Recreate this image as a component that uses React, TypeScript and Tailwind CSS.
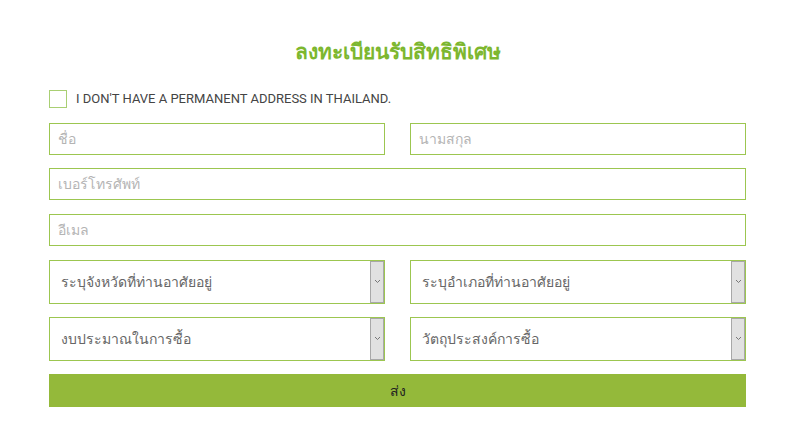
import React from 'react';

const font = { fontFamily: '"Noto Sans", "Open Sans", "DejaVu Sans", sans-serif' };

const TextField = ({ placeholder }: { placeholder: string }) => (
  <div className="h-[32px] flex-1 border border-[#9cc650] bg-white flex items-center px-[8px]">
    <span className="text-[14px] text-[#b4b4b4]">{placeholder}</span>
  </div>
);

const SelectField = ({ placeholder }: { placeholder: string }) => (
  <div className="h-[44px] flex-1 border border-[#9cc650] bg-white flex items-stretch">
    <div className="flex-1 flex items-center px-[11px]">
      <span className="text-[14px] text-[#666]">{placeholder}</span>
    </div>
    <div className="w-[14px] bg-[#e1e1e1] border border-[#a8a8a8] flex items-center justify-center">
      <svg width="7" height="5" viewBox="0 0 7 5">
        <path d="M1 1l2.5 2.5L6 1" stroke="#777" strokeWidth="1" fill="none" />
      </svg>
    </div>
  </div>
);

export default function App() {
  return (
    <div className="w-[800px] h-[445px] bg-white" style={font}>
      <div className="ml-[49px] w-[697px] pt-[35px] flex flex-col">
        <h1 className="text-center text-[21px] font-bold text-[#7db72f] leading-[32px]">
          ลงทะเบียนรับสิทธิพิเศษ
        </h1>

        <label className="mt-[22px] flex items-center gap-[9px]">
          <span className="w-[18px] h-[18px] border border-[#a9cf73] bg-white"></span>
          <span className="text-[13px] text-[#444] font-['Roboto',sans-serif]">I DON'T HAVE A PERMANENT ADDRESS IN THAILAND.</span>
        </label>

        <div className="mt-[14px] flex gap-[25px]">
          <TextField placeholder="ชื่อ" />
          <TextField placeholder="นามสกุล" />
        </div>

        <div className="mt-[13px] flex">
          <TextField placeholder="เบอร์โทรศัพท์" />
        </div>

        <div className="mt-[14px] flex">
          <TextField placeholder="อีเมล" />
        </div>

        <div className="mt-[14px] flex gap-[25px]">
          <SelectField placeholder="ระบุจังหวัดที่ท่านอาศัยอยู่" />
          <SelectField placeholder="ระบุอำเภอที่ท่านอาศัยอยู่" />
        </div>

        <div className="mt-[13px] flex gap-[25px]">
          <SelectField placeholder="งบประมาณในการซื้อ" />
          <SelectField placeholder="วัตถุประสงค์การซื้อ" />
        </div>

        <button className="mt-[13px] h-[33px] w-full bg-[#94b93a] text-[14px] text-[#222]">
          ส่ง
        </button>
      </div>
    </div>
  );
}
